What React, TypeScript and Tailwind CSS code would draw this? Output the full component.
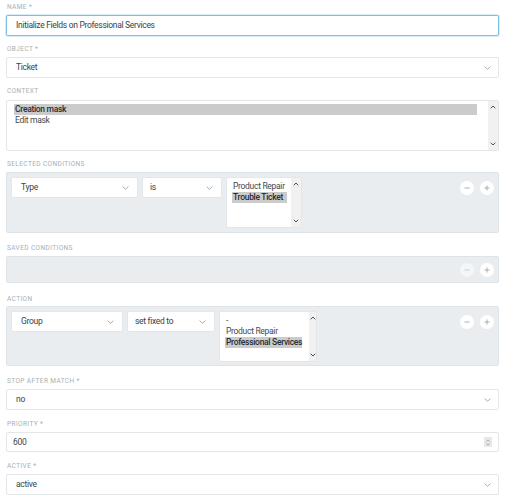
import React from "react";

const font = "font-['Roboto',sans-serif]";
const txt = "text-[8.5px] tracking-[-0.3px]";

function Chevron({ color = "#9aa3a9" }: { color?: string }) {
  return (
    <svg width="7" height="4" viewBox="0 0 7 4" className="shrink-0">
      <path d="M0.6 0.6 L3.5 3.3 L6.4 0.6" stroke={color} fill="none" strokeWidth="0.9" />
    </svg>
  );
}

function UpArrow() {
  return (
    <svg width="6" height="4" viewBox="0 0 6 4">
      <path d="M0.7 3.3 L3 1 L5.3 3.3" stroke="#4b5358" fill="none" strokeWidth="1" />
    </svg>
  );
}
function DownArrow() {
  return (
    <svg width="6" height="4" viewBox="0 0 6 4">
      <path d="M0.7 0.7 L3 3 L5.3 0.7" stroke="#4b5358" fill="none" strokeWidth="1" />
    </svg>
  );
}

function Label({ children, className = "" }: { children: React.ReactNode; className?: string }) {
  return (
    <div
      className={`h-[10px] pl-[1px] text-[6.5px] leading-[10px] uppercase tracking-[0.4px] text-[#a6afb6] ${className}`}
    >
      {children}
    </div>
  );
}

function Select({
  value,
  className = "",
  padL = "pl-[9px]",
  padR = "pr-[7px]",
}: {
  value: string;
  className?: string;
  padL?: string;
  padR?: string;
}) {
  return (
    <div
      className={`flex h-[21px] items-center justify-between rounded-[2px] border border-[#e3e7ea] bg-white ${padL} ${padR} ${txt} text-[#37434c] ${className}`}
    >
      <span>{value}</span>
      <Chevron />
    </div>
  );
}

function Listbox({
  options,
  selected,
  className = "",
  optClass = "pl-[6px] pr-[5px]",
  sbClass = "w-[10px]",
}: {
  options: string[];
  selected: string;
  className?: string;
  optClass?: string;
  sbClass?: string;
}) {
  return (
    <div className={`flex h-[51px] rounded-[2px] border border-[#e3e7ea] bg-white ${className}`}>
      <div className={`flex-1 pt-[3px] ${optClass}`}>
        {options.map((o) => (
          <div
            key={o}
            className={`h-[11px] whitespace-nowrap pl-[1px] leading-[11px] ${txt} ${
              o === selected ? "bg-[#cbcbcb] font-medium text-[#262d33]" : "text-[#3f4a53]"
            }`}
          >
            {o}
          </div>
        ))}
      </div>
      <div className={`flex flex-col items-center justify-between bg-[#f1f1f1] pt-[4px] pb-[4px] ${sbClass}`}>
        <UpArrow />
        <DownArrow />
      </div>
    </div>
  );
}

function RoundButton({ kind, faded = false }: { kind: "minus" | "plus"; faded?: boolean }) {
  return (
    <div
      className={`flex h-[14px] w-[14px] items-center justify-center rounded-full bg-white ${
        faded ? "opacity-50" : ""
      }`}
    >
      <svg width="6" height="6" viewBox="0 0 6 6">
        <path d="M0.5 3 H5.5" stroke="#9ea6ac" strokeWidth="0.9" />
        {kind === "plus" && <path d="M3 0.5 V5.5" stroke="#9ea6ac" strokeWidth="0.9" />}
      </svg>
    </div>
  );
}

function Buttons({ fadedMinus = false }: { fadedMinus?: boolean }) {
  return (
    <div className="ml-auto flex h-[21px] items-center gap-[6px]">
      <RoundButton kind="minus" faded={fadedMinus} />
      <RoundButton kind="plus" />
    </div>
  );
}

export default function App() {
  return (
    <div className={`w-[506px] h-[500px] bg-white pl-[6px] pr-[7px] pt-[2px] ${font}`}>
      <Label className="mb-[3px]">Name *</Label>
      <div
        className={`mb-[8px] flex h-[21px] items-center rounded-[2px] border border-[#7fbfe5] bg-white pl-[9px] ${txt} text-[#37434c] shadow-[0_0_0_1px_#d9edf9]`}
      >
        Initialize Fields on Professional Services
      </div>

      <Label className="mb-[3px]">Object *</Label>
      <Select value="Ticket" className="mb-[8px]" />

      <Label className="mb-[4px]">Context</Label>
      <Listbox
        options={["Creation mask", "Edit mask"]}
        selected="Creation mask"
        className="mb-[8px]"
        optClass="pl-[7px] pr-[11px]"
        sbClass="w-[10px]"
      />

      <Label className="mb-[3px]">Selected Conditions</Label>
      <div className="mb-[10px] flex h-[61px] items-start gap-[4px] rounded-[2px] border border-[#dde3e7] bg-[#e9edf0] p-[4px]">
        <Select value="Type" className="w-[127px]" padL="pl-[9px]" padR="pr-[8px]" />
        <Select value="is" className="w-[80px]" padL="pl-[7px]" padR="pr-[8px]" />
        <Listbox
          options={["Product Repair", "Trouble Ticket"]}
          selected="Trouble Ticket"
          className="w-[76px]"
          optClass="pl-[5px] pr-[4px]"
          sbClass="w-[10px]"
        />
        <Buttons />
      </div>

      <Label className="mb-[3px]">Saved Conditions</Label>
      <div className="mb-[11px] flex h-[27px] items-center rounded-[2px] border border-[#dde3e7] bg-[#e9edf0] pr-[4px]">
        <Buttons fadedMinus />
      </div>

      <Label className="mb-[2px]">Action</Label>
      <div className="mb-[10px] flex h-[60px] items-start gap-[4px] rounded-[2px] border border-[#dde3e7] bg-[#e9edf0] px-[4px] pt-[4px] pb-[3px]">
        <Select value="Group" className="w-[112px]" padL="pl-[9px]" padR="pr-[8px]" />
        <Select value="set fixed to" className="w-[88px]" padL="pl-[7px]" padR="pr-[8px]" />
        <Listbox
          options={["-", "Product Repair", "Professional Services"]}
          selected="Professional Services"
          className="w-[98px]"
          optClass="pl-[5px] pr-[7px] pt-[1px]"
          sbClass="w-[10px]"
        />
        <Buttons />
      </div>

      <Label className="mb-[3px]">Stop after match *</Label>
      <Select value="no" className="mb-[9px]" />

      <Label className="mb-[3px]">Priority *</Label>
      <div
        className={`mb-[9px] flex h-[20px] items-center justify-between rounded-[2px] border border-[#e3e7ea] bg-white pl-[6px] pr-[6px] ${txt} text-[#37434c]`}
      >
        <span>600</span>
        <div className="flex h-[10px] w-[8px] flex-col items-center justify-center gap-[1px] bg-[#e8e8e8]">
          <svg width="4" height="3" viewBox="0 0 4 3">
            <path d="M0.4 2.6 L2 0.8 L3.6 2.6" stroke="#8f979c" fill="none" strokeWidth="0.7" />
          </svg>
          <svg width="4" height="3" viewBox="0 0 4 3">
            <path d="M0.4 0.4 L2 2.2 L3.6 0.4" stroke="#8f979c" fill="none" strokeWidth="0.7" />
          </svg>
        </div>
      </div>

      <Label className="mb-[3px]">Active *</Label>
      <Select value="active" />
    </div>
  );
}
